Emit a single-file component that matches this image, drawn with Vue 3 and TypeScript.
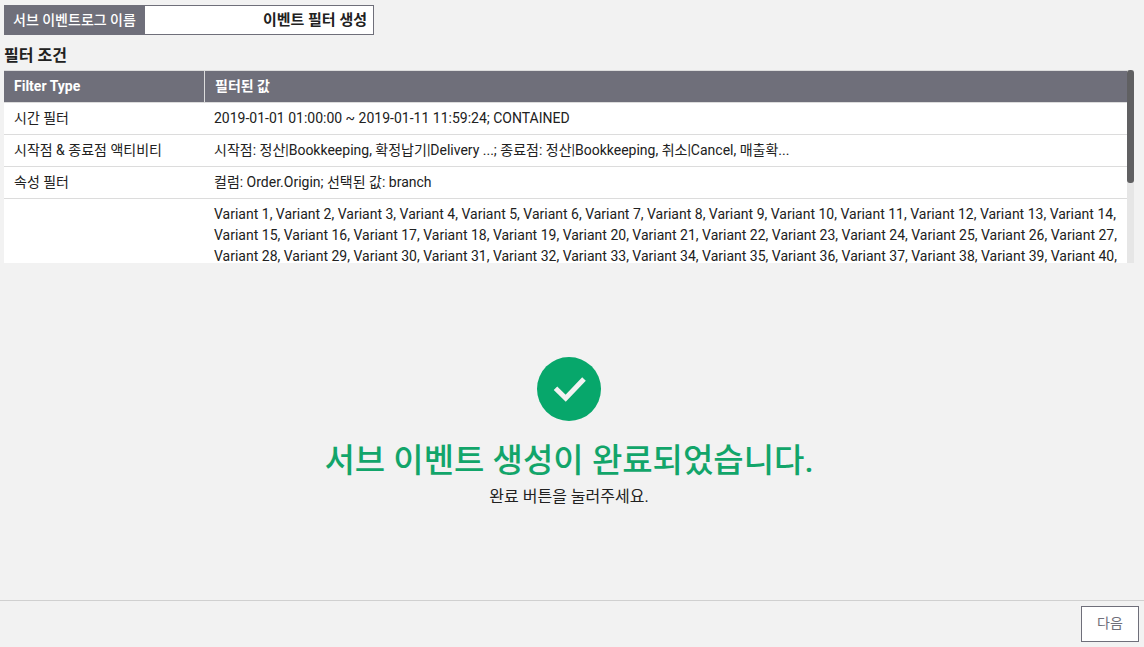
<script setup lang="ts">
import { computed, onBeforeUnmount, onMounted, ref } from 'vue'

interface FilterRow {
  type: string
  value: string
}

const logName = ref('이벤트 필터 생성')

const variants = Array.from({ length: 112 }, (_, i) => `Variant ${i + 1}`).join(', ')

const rows: FilterRow[] = [
  { type: '시간 필터', value: '2019-01-01 01:00:00 ~ 2019-01-11 11:59:24; CONTAINED' },
  {
    type: '시작점 & 종료점 액티비티',
    value: '시작점: 정산|Bookkeeping, 확정납기|Delivery ...; 종료점: 정산|Bookkeeping, 취소|Cancel, 매출확...',
  },
  { type: '속성 필터', value: '컬럼: Order.Origin; 선택된 값: branch' },
  { type: '', value: variants },
]

const viewport = ref<HTMLElement | null>(null)
const thumbSize = ref(58)
const thumbOffset = ref(0)

const thumbStyle = computed(() => ({
  height: `${thumbSize.value}%`,
  top: `${thumbOffset.value}%`,
}))

function syncThumb(): void {
  const el = viewport.value
  if (!el) return
  thumbSize.value = (el.clientHeight / el.scrollHeight) * 100
  thumbOffset.value = (el.scrollTop / el.scrollHeight) * 100
}

onMounted(() => {
  syncThumb()
  window.addEventListener('resize', syncThumb)
})
onBeforeUnmount(() => window.removeEventListener('resize', syncThumb))
</script>

<template>
  <div class="page">
    <main class="content">
      <div class="name-field">
        <label class="name-label" for="log-name">서브 이벤트로그 이름</label>
        <input id="log-name" v-model="logName" class="name-input" type="text" />
      </div>

      <h2 class="section-title">필터 조건</h2>

      <div class="table-box">
        <div ref="viewport" class="table-viewport" @scroll="syncThumb">
          <table class="filter-table">
            <thead>
              <tr>
                <th class="type-col" scope="col">Filter Type</th>
                <th scope="col">필터된 값</th>
              </tr>
            </thead>
            <tbody>
              <tr v-for="(row, index) in rows" :key="index">
                <td>{{ row.type }}</td>
                <td>{{ row.value }}</td>
              </tr>
            </tbody>
          </table>
        </div>
        <div class="track">
          <div class="thumb" :style="thumbStyle"></div>
        </div>
      </div>

      <section class="result">
        <svg class="result-icon" viewBox="0 0 64 64" aria-hidden="true">
          <circle cx="32" cy="32" r="32" fill="#07a76b" />
          <path d="M18.5 31.2 28.7 41.2 47 22" fill="none" stroke="#f2f2f2" stroke-width="5" />
        </svg>
        <h1 class="result-title">서브 이벤트 생성이 완료되었습니다.</h1>
        <p class="result-note">완료 버튼을 눌러주세요.</p>
      </section>
    </main>

    <footer class="footer">
      <button class="next" type="button">다음</button>
    </footer>
  </div>
</template>

<style>
body {
  margin: 0;
  background: #f2f2f2;
}
</style>

<style scoped>
.page {
  display: flex;
  flex-direction: column;
  min-height: 100vh;
  box-sizing: border-box;
  background: #f2f2f2;
  color: #212121;
  font-family: Roboto, 'Noto Sans CJK KR', sans-serif;
  font-size: 14px;
  line-height: 21px;
}

.content {
  flex: 1;
  display: flex;
  flex-direction: column;
  padding: 5px 10px 0 4px;
}

.name-field {
  display: flex;
  width: 370px;
  height: 30px;
  box-sizing: border-box;
  border: 1px solid #6f6f7a;
  background: #fff;
}

.name-label {
  flex: none;
  width: 140px;
  box-sizing: border-box;
  padding-left: 8px;
  background: #6f6f7a;
  color: #fff;
  font-weight: 500;
  line-height: 28px;
}

.name-input {
  flex: 1;
  min-width: 0;
  padding: 0 6px 0 0;
  border: 0;
  background: transparent;
  color: #212121;
  font: inherit;
  font-size: 15px;
  font-weight: 700;
  text-align: right;
}

.section-title {
  margin: 8px 0 2px;
  font-size: 16px;
  font-weight: 700;
  line-height: 25px;
}

.table-box {
  display: flex;
  height: 193px;
}

.table-viewport {
  flex: 1;
  overflow-y: auto;
  background: #fff;
  scrollbar-width: none;
}

.filter-table {
  width: 100%;
  border-collapse: separate;
  border-spacing: 0;
  table-layout: fixed;
}

.filter-table th,
.filter-table td {
  padding: 5px 10px;
  border-bottom: 1px solid #dcdcdc;
  text-align: left;
}

.filter-table th {
  border-top: 1px solid #dcdcdc;
  background: #6f6f7a;
  color: #fff;
  font-weight: 700;
}

.filter-table th + th {
  border-left: 1px solid #dcdcdc;
}

.type-col {
  width: 180px;
}

.track {
  position: relative;
  flex: none;
  width: 7px;
  background: #e6e6e6;
}

.thumb {
  position: absolute;
  left: 0;
  right: 0;
  border-radius: 3px;
  background: #606062;
}

.result {
  flex: 1;
  display: flex;
  flex-direction: column;
  align-items: center;
  justify-content: center;
  padding-top: 2px;
}

.result-icon {
  width: 64px;
  height: 64px;
}

.result-title {
  margin: 16px 0 0;
  color: #12a56a;
  font-size: 33px;
  font-weight: 500;
  line-height: 48px;
}

.result-note {
  margin: 0;
  font-size: 16px;
  line-height: 24px;
}

.footer {
  display: flex;
  justify-content: flex-end;
  padding: 5px;
  border-top: 1px solid #d0d0d0;
}

.next {
  width: 58px;
  height: 36px;
  padding: 0 0 2px;
  border: 1px solid #6f6f7a;
  background: #fff;
  color: #6f6f7a;
  font: inherit;
}
</style>
